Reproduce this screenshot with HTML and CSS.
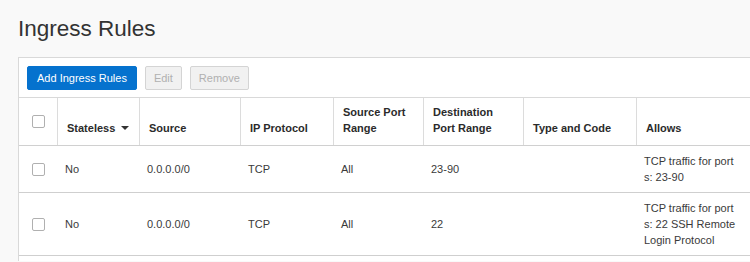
FILE: index.html
```html
<!DOCTYPE html>
<html>
<head>
<meta charset="utf-8">
<link rel="stylesheet" href="styles.css">
</head>
<body>
<div class="page">
  <h1 class="title">Ingress Rules</h1>
  <div class="panel">
    <div class="toolbar">
      <button class="btn btn-primary">Add Ingress Rules</button>
      <button class="btn btn-disabled">Edit</button>
      <button class="btn btn-disabled">Remove</button>
    </div>
    <div class="row head">
      <div class="cell check-cell"><span class="checkbox"></span></div>
      <div class="cell"><span>Stateless</span><span class="sort"></span></div>
      <div class="cell">Source</div>
      <div class="cell">IP Protocol</div>
      <div class="cell"><span>Source Port<br>Range</span></div>
      <div class="cell"><span>Destination<br>Port Range</span></div>
      <div class="cell">Type and Code</div>
      <div class="cell">Allows</div>
    </div>
    <div class="row body">
      <div class="cell check-cell"><span class="checkbox"></span></div>
      <div class="cell">No</div>
      <div class="cell">0.0.0.0/0</div>
      <div class="cell">TCP</div>
      <div class="cell">All</div>
      <div class="cell">23-90</div>
      <div class="cell"></div>
      <div class="cell"><span class="allows">TCP traffic for ports: 23-90</span></div>
    </div>
    <div class="row body">
      <div class="cell check-cell"><span class="checkbox"></span></div>
      <div class="cell">No</div>
      <div class="cell">0.0.0.0/0</div>
      <div class="cell">TCP</div>
      <div class="cell">All</div>
      <div class="cell">22</div>
      <div class="cell"></div>
      <div class="cell"><span class="allows">TCP traffic for ports: 22 SSH Remote Login Protocol</span></div>
    </div>
    <div class="filler"></div>
  </div>
</div>
</body>
</html>
```

FILE: styles.css
```css
html, body {
  margin: 0;
  padding: 0;
  background: #f9f9f9;
  overflow: hidden;
  font-family: "Liberation Sans", Arial, sans-serif;
  color: #333;
}

.page {
  padding-left: 18px;
}

.title {
  margin: 0 0 15px 0;
  padding-top: 16px;
  font-size: 22.5px;
  line-height: 26px;
  font-weight: normal;
  color: #333;
}

.panel {
  background: #fff;
  border: 1px solid #d9d9d9;
  border-right: none;
  border-bottom: none;
}

.toolbar {
  display: flex;
  gap: 8px;
  padding: 8px 8px 7px 8px;
}

.btn {
  height: 24px;
  box-sizing: border-box;
  font-family: "Liberation Sans", Arial, sans-serif;
  font-size: 11px;
  line-height: 16px;
  border-radius: 2px;
  padding: 0 8px;
  margin: 0;
}

.btn-primary {
  background: #0572ce;
  border: 1px solid #0572ce;
  color: #fff;
  padding: 0 9px;
}

.btn-disabled {
  background: #f1f1f1;
  border: 1px solid #d4d4d4;
  color: #b0b0b0;
}

.row {
  display: grid;
  grid-template-columns: 39px 82px 101px 93px 90px 100px 113px 1fr;
}

.cell {
  box-sizing: border-box;
  font-size: 11px;
  line-height: 16px;
  min-width: 0;
}

.head {
  border-top: 1px solid #d9d9d9;
  border-bottom: 1px solid #d0d0d0;
}

.head .cell {
  height: 47px;
  display: flex;
  align-items: flex-end;
  padding: 0 6px 9px 9px;
  font-weight: bold;
  color: #2b2b2b;
  border-right: 1px solid #dcdcdc;
}

.head .cell:last-child {
  border-right: none;
}

.body {
  border-bottom: 1px solid #cfcfcf;
}

.body .cell {
  display: flex;
  align-items: center;
  padding: 7px 6px 7px 7px;
  color: #3a3a3a;
}

.head .check-cell,
.body .check-cell {
  padding: 0;
  justify-content: center;
  align-items: center;
}

.checkbox {
  display: block;
  width: 13px;
  height: 13px;
  box-sizing: border-box;
  border: 1px solid #b0b0b0;
  border-radius: 2px;
  background: #fff;
}

.sort {
  display: inline-block;
  width: 0;
  height: 0;
  border-left: 4px solid transparent;
  border-right: 4px solid transparent;
  border-top: 4px solid #333;
  margin: 0 0 6px 6px;
}

.allows {
  display: block;
  width: 94px;
  word-break: break-all;
}

.filler {
  height: 5px;
}
```
